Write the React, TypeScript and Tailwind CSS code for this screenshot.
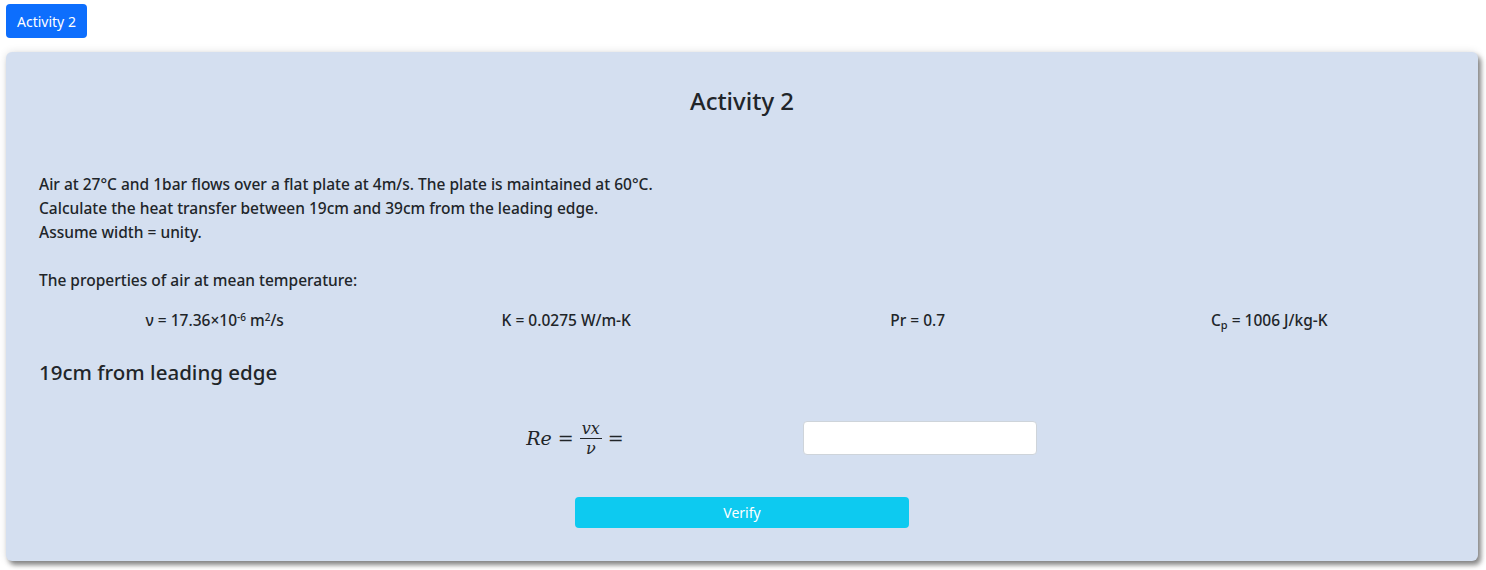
export default function App() {
  return (
    <div className="min-h-screen bg-white pl-[6px] pr-[8px] pt-[4px] text-[#212529] [font-family:'Noto_Sans',sans-serif]">
      {/* Tab button */}
      <button className="h-[34px] rounded-[4px] bg-[#0d6efd] px-[11px] text-[14px] text-white">
        Activity 2
      </button>

      {/* Activity card */}
      <div className="mt-[14px] rounded-[6px] bg-[#d4dff0] px-[33px] pb-[33px] pt-[34px] shadow-[3px_4px_5px_rgba(0,0,0,0.45),0_0_8px_rgba(0,0,0,0.12)]">
        <h2 className="text-center text-[24px] font-medium leading-[29px]">Activity 2</h2>

        <div className="mt-[57px] text-[15.5px] font-medium leading-[24px]">
          <p>Air at 27°C and 1bar flows over a flat plate at 4m/s. The plate is maintained at 60°C.</p>
          <p>Calculate the heat transfer between 19cm and 39cm from the leading edge.</p>
          <p>Assume width = unity.</p>
          <p className="mt-[24px]">The properties of air at mean temperature:</p>
        </div>

        {/* Properties */}
        <div className="mt-[16px] grid grid-cols-4 text-center text-[15.5px] font-medium leading-[24px]">
          <div>
            ν = 17.36×10<sup className="text-[10px]">-6</sup> m<sup className="text-[10px]">2</sup>/s
          </div>
          <div>K = 0.0275 W/m-K</div>
          <div>Pr = 0.7</div>
          <div>
            C<sub className="text-[11px]">p</sub> = 1006 J/kg-K
          </div>
        </div>

        <h3 className="mt-[28px] text-[20.5px] font-medium leading-[24px]">19cm from leading edge</h3>

        {/* Reynolds number */}
        <div className="mx-auto mt-[37px] grid h-[34px] w-[701px] grid-cols-2 items-center pl-[11px]">
          <div className="flex h-[34px] items-center justify-center gap-[6px] text-[19px] [font-family:'DejaVu_Serif','Liberation_Serif',serif]">
            <span className="italic">Re</span>
            <span>=</span>
            <span className="inline-flex flex-col items-center text-[16px] leading-[17px]">
              <span className="px-[2px] italic">vx</span>
              <span className="my-[1px] h-px w-full bg-[#212529]" />
              <span className="italic">ν</span>
            </span>
            <span>=</span>
          </div>
          <div className="flex justify-center">
            <input className="h-[34px] w-[234px] rounded-[4px] border border-[#ced4da] bg-white px-3 text-[15px] outline-none" />
          </div>
        </div>

        <div className="mt-[42px] flex justify-center">
          <button className="h-[31px] w-[334px] rounded-[4px] bg-[#0dcaf0] text-[14px] text-white">Verify</button>
        </div>
      </div>
    </div>
  );
}
